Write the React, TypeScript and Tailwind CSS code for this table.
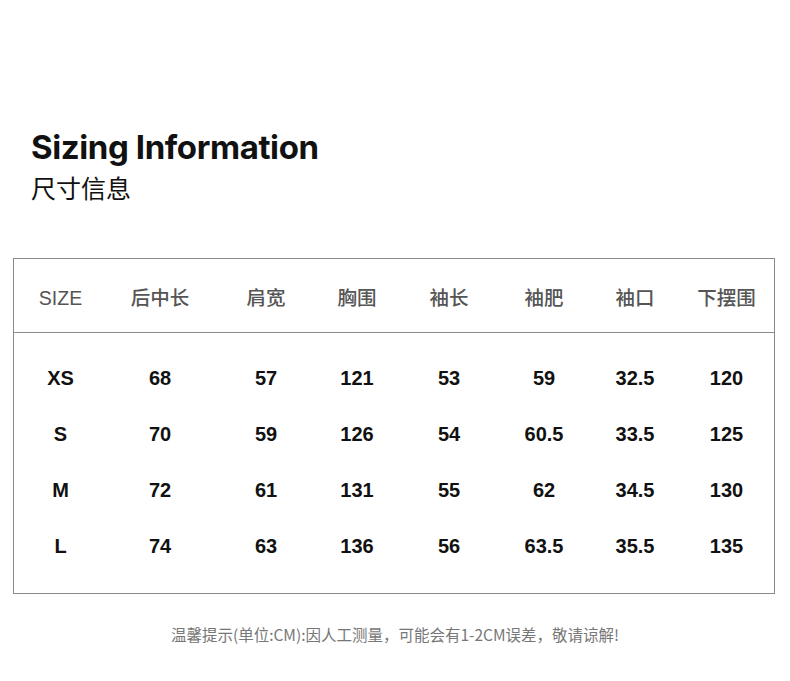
const HEADERS = ["SIZE", "后中长", "肩宽", "胸围", "袖长", "袖肥", "袖口", "下摆围"];

const ROWS = [
  ["XS", "68", "57", "121", "53", "59", "32.5", "120"],
  ["S", "70", "59", "126", "54", "60.5", "33.5", "125"],
  ["M", "72", "61", "131", "55", "62", "34.5", "130"],
  ["L", "74", "63", "136", "56", "63.5", "35.5", "135"],
];

const cols = "grid grid-cols-[93px_106px_106px_76px_108px_82px_100px_89px]";

export default function App() {
  return (
    <div className="h-[681px] w-[790px] bg-white font-['Liberation_Sans','Noto_Sans_CJK_SC',sans-serif]">
      <div className="pl-[31px] pt-[126px]">
        <h1 className="font-['Inter','Liberation_Sans',sans-serif] text-[33px] font-bold leading-[42px] tracking-[-0.4px] text-[#111]">
          Sizing Information
        </h1>
        <p className="mt-[4px] font-['Noto_Sans_CJK_SC',sans-serif] text-[25px] leading-[31px] text-[#111]">尺寸信息</p>
      </div>

      <div className="ml-[13px] mt-[55px] w-[762px] border border-[#8a8a8a]">
        <div className={`${cols} h-[74px] items-center border-b border-[#8a8a8a] pt-[7px]`}>
          {HEADERS.map((h, i) => (
            <div
              key={h}
              className={`text-center font-['Liberation_Sans','Noto_Sans_CJK_SC',sans-serif] text-[19.5px] font-medium text-[#555] ${i === 7 ? "pr-[6px]" : ""}`}
            >
              {h}
            </div>
          ))}
        </div>
        <div className="pt-[17px] pb-[19px]">
          {ROWS.map((row) => (
            <div key={row[0]} className={`${cols} h-[56px] items-center`}>
              {row.map((cell, i) => (
                <div key={i} className={`text-center text-[20px] font-bold text-[#111] ${i === 7 ? "pr-[6px]" : ""}`}>
                  {cell}
                </div>
              ))}
            </div>
          ))}
        </div>
      </div>

      <p className="mt-[29px] text-center font-['Noto_Sans_CJK_SC',sans-serif] text-[15.5px] leading-[22px] text-[#777]">
        温馨提示(单位:CM):因人工测量，可能会有1-2CM误差，敬请谅解!
      </p>
    </div>
  );
}
